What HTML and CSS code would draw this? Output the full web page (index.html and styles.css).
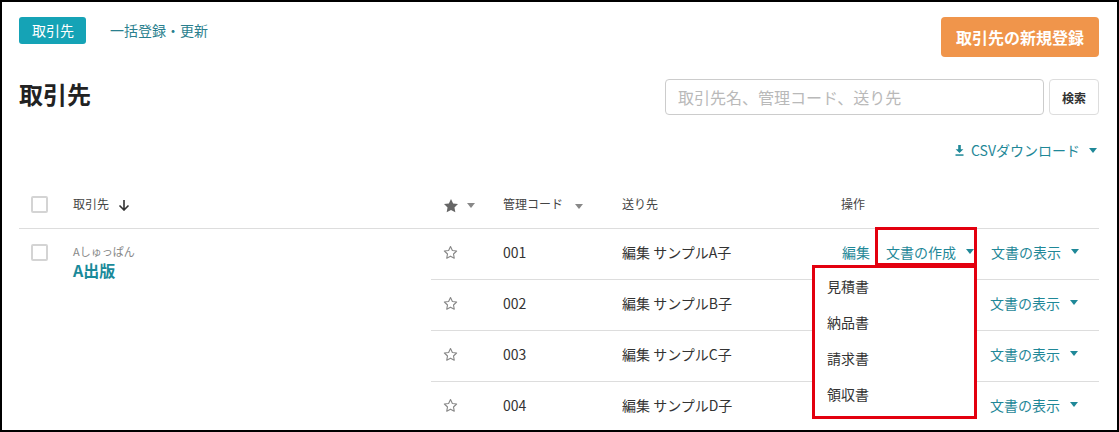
FILE: index.html
```html
<!DOCTYPE html>
<html lang="ja">
<head>
<meta charset="utf-8">
<title>取引先</title>
<link rel="stylesheet" href="styles.css">
</head>
<body>
<div class="frame">
  <div class="topbar">
    <a class="tab">取引先</a>
    <a class="toplink">一括登録・更新</a>
    <button class="btn-primary">取引先の新規登録</button>
  </div>

  <div class="titlebar">
    <h1 class="title">取引先</h1>
    <form class="search">
      <input class="search-input" type="text" placeholder="取引先名、管理コード、送り先">
      <button class="search-btn" type="button">検索</button>
    </form>
  </div>

  <div class="toolbar">
    <a class="csv">
      <svg class="dl-icon" width="9" height="11" viewBox="0 0 9 11"><path d="M3.2 0h2.6v4.2h2.6L4.5 8 .6 4.2h2.6z" fill="currentColor"/><rect x="0.5" y="9.3" width="8" height="1.5" fill="currentColor"/></svg>
      CSVダウンロード
      <span class="caret"></span>
    </a>
  </div>

  <table class="clients">
    <colgroup>
      <col class="c-check"><col class="c-name"><col class="c-star"><col class="c-code"><col class="c-dest"><col class="c-ops">
    </colgroup>
    <thead>
      <tr>
        <th><span class="checkbox"></span></th>
        <th>取引先 <svg class="sort" width="12" height="12" viewBox="0 0 12 12"><path d="M6 1v10M1.5 6.5L6 11l4.5-4.5" fill="none" stroke="currentColor" stroke-width="1.6"/></svg></th>
        <th><svg class="star-h" width="16" height="16" viewBox="0 0 24 24"><path d="M12 1.5l3.2 6.6 7.3 1-5.3 5.1 1.3 7.2L12 18l-6.5 3.4 1.3-7.2-5.3-5.1 7.3-1z" fill="currentColor"/></svg><span class="caret caret-grey"></span></th>
        <th>管理コード<span class="caret caret-grey caret-code"></span></th>
        <th>送り先</th>
        <th>操作</th>
      </tr>
    </thead>
    <tbody>
      <tr>
        <td class="cell-check" rowspan="4"><span class="checkbox"></span></td>
        <td class="cell-name" rowspan="4">
          <div class="kana">Aしゅっぱん</div>
          <a class="company">A出版</a>
        </td>
        <td class="line"><svg class="star" width="15" height="15" viewBox="0 0 24 24"><path d="M12 2.5l3 6.2 6.8.9-5 4.8 1.2 6.7L12 17.9l-6 3.2 1.2-6.7-5-4.8 6.8-.9z" fill="none" stroke="currentColor" stroke-width="1.8" stroke-linejoin="round"/></svg></td>
        <td class="line">001</td>
        <td class="line">編集 サンプルA子</td>
        <td class="line">
          <div class="ops">
            <a class="op-edit">編集</a>
            <span class="dropdown">
              <span class="highlight"></span>
              <a class="dd-toggle">文書の作成<span class="caret"></span></a>
              <ul class="menu">
                <li>見積書</li>
                <li>納品書</li>
                <li>請求書</li>
                <li>領収書</li>
              </ul>
            </span>
            <a class="op-view">文書の表示<span class="caret"></span></a>
          </div>
        </td>
      </tr>
      <tr>
        <td class="line"><svg class="star" width="15" height="15" viewBox="0 0 24 24"><path d="M12 2.5l3 6.2 6.8.9-5 4.8 1.2 6.7L12 17.9l-6 3.2 1.2-6.7-5-4.8 6.8-.9z" fill="none" stroke="currentColor" stroke-width="1.8" stroke-linejoin="round"/></svg></td>
        <td class="line">002</td>
        <td class="line">編集 サンプルB子</td>
        <td class="line"><div class="ops ops-right"><a class="op-view">文書の表示<span class="caret"></span></a></div></td>
      </tr>
      <tr>
        <td class="line"><svg class="star" width="15" height="15" viewBox="0 0 24 24"><path d="M12 2.5l3 6.2 6.8.9-5 4.8 1.2 6.7L12 17.9l-6 3.2 1.2-6.7-5-4.8 6.8-.9z" fill="none" stroke="currentColor" stroke-width="1.8" stroke-linejoin="round"/></svg></td>
        <td class="line">003</td>
        <td class="line">編集 サンプルC子</td>
        <td class="line"><div class="ops ops-right"><a class="op-view">文書の表示<span class="caret"></span></a></div></td>
      </tr>
      <tr>
        <td class="line"><svg class="star" width="15" height="15" viewBox="0 0 24 24"><path d="M12 2.5l3 6.2 6.8.9-5 4.8 1.2 6.7L12 17.9l-6 3.2 1.2-6.7-5-4.8 6.8-.9z" fill="none" stroke="currentColor" stroke-width="1.8" stroke-linejoin="round"/></svg></td>
        <td class="line">004</td>
        <td class="line">編集 サンプルD子</td>
        <td class="line"><div class="ops ops-right"><a class="op-view">文書の表示<span class="caret"></span></a></div></td>
      </tr>
    </tbody>
  </table>
</div>
</body>
</html>
```

FILE: styles.css
```css
* { box-sizing: border-box; }
html, body { margin: 0; padding: 0; background: #fff; }
body {
  font-family: "Noto Sans CJK JP", "Noto Sans", sans-serif;
  color: #333;
}
a { text-decoration: none; cursor: pointer; }

.frame {
  width: 1119px;
  height: 432px;
  border: 2px solid #000;
  padding: 15px 18px 0 17px;
  overflow: hidden;
}

/* top bar */
.topbar { display: flex; align-items: flex-start; }
.tab {
  display: inline-block;
  height: 27px;
  line-height: 27px;
  padding: 0 12px 0 13px;
  background: #15a3b6;
  color: #fff;
  font-size: 14px;
  border-radius: 3px;
}
.toplink {
  margin-left: 24px;
  line-height: 27px;
  font-size: 14px;
  color: #2a7f8e;
}
.btn-primary {
  margin-left: auto;
  height: 40px;
  padding: 0 15px;
  border: 0;
  border-radius: 4px;
  background: #f0954b;
  color: #fff;
  font-family: inherit;
  font-size: 16px;
  font-weight: 700;
}

/* title */
.titlebar {
  margin-top: 22px;
  display: flex;
  justify-content: space-between;
  align-items: flex-start;
}
.title {
  margin: 0;
  font-size: 24px;
  line-height: 30px;
  font-weight: 700;
  color: #222;
}
.search { display: flex; margin: 0; }
.search-input {
  width: 379px;
  height: 36px;
  border: 1px solid #ccc;
  border-radius: 4px;
  padding: 0 12px;
  font-family: inherit;
  font-size: 16px;
  color: #333;
}
.search-input::placeholder { color: #b9b9b9; }
.search-btn {
  margin-left: 5px;
  width: 50px;
  height: 36px;
  border: 1px solid #ddd;
  border-radius: 4px;
  background: #fff;
  font-family: inherit;
  font-size: 12px;
  font-weight: 700;
  color: #333;
}

/* toolbar */
.toolbar {
  margin-top: 25px;
  display: flex;
  justify-content: flex-end;
  padding-right: 2px;
}
.csv {
  display: flex;
  align-items: center;
  line-height: 20px;
  font-size: 14px;
  color: #1f8898;
}
.dl-icon { margin-right: 7px; }

.caret {
  display: inline-block;
  width: 0;
  height: 0;
  border-left: 4px solid transparent;
  border-right: 4px solid transparent;
  border-top: 5px solid currentColor;
  margin-left: 9px;
  vertical-align: middle;
}
.caret-grey { color: #888; margin-left: 8px; }
.caret-code { margin-left: 12px; }

/* table */
.clients {
  margin-top: 25px;
  width: 1080px;
  table-layout: fixed;
  border-collapse: separate;
  border-spacing: 0;
}
.c-check { width: 42px; }
.c-name { width: 370px; }
.c-star { width: 60px; }
.c-code { width: 119px; }
.c-dest { width: 219px; }
.c-ops { width: 270px; }

.clients th {
  text-align: left;
  font-weight: 400;
  font-size: 12px;
  color: #444;
  line-height: 18px;
  padding: 10px 12px 14px;
  border-bottom: 1px solid #ddd;
  white-space: nowrap;
}
.clients th svg { vertical-align: middle; }
.sort { margin-left: 6px; color: #333; position: relative; top: -1px; }
.star-h { color: #666; }

.checkbox {
  display: block;
  width: 17px;
  height: 17px;
  border: 2px solid #d4d4d4;
  border-radius: 2px;
}

.clients td {
  font-size: 14px;
  line-height: 20px;
  padding: 13px 12px 17px;
  vertical-align: top;
  color: #333;
  white-space: nowrap;
}
.clients td.line { border-bottom: 1px solid #ddd; }
.clients td.cell-check { padding-top: 15px; }
.clients td.cell-name { padding-top: 14px; }
.kana { font-size: 11px; line-height: 16px; color: #888; }
.company {
  display: block;
  font-size: 16px;
  line-height: 22px;
  font-weight: 700;
  color: #1a8a9a;
}
.star { color: #888; vertical-align: middle; position: relative; top: -1px; }

/* operations */
.ops { display: flex; align-items: center; }
.ops-right { padding-left: 149px; }
.op-edit { color: #1f8898; margin-left: 1px; margin-right: 5px; }
.op-view { color: #1f8898; margin-left: 14px; display: inline-flex; align-items: center; }
.ops-right .op-view { margin-left: 0; }

.dropdown {
  position: relative;
  padding: 0 3px 0 11px;
  display: inline-flex;
}
.dd-toggle { color: #1f8898; display: inline-flex; align-items: center; }
.ops .caret { margin-left: 10px; }
.highlight {
  position: absolute;
  left: 0;
  right: 0;
  top: -15px;
  bottom: -4px;
  border: 3px solid #e3000f;
  pointer-events: none;
}
.menu {
  position: absolute;
  left: -63px;
  top: 23px;
  width: 165px;
  height: 154px;
  margin: 0;
  padding: 0 0 4px;
  list-style: none;
  background: #fff;
  border: 3px solid #e3000f;
  z-index: 10;
}
.menu li {
  height: 36px;
  line-height: 36px;
  padding-left: 12px;
  font-size: 14px;
  color: #333;
}
```
